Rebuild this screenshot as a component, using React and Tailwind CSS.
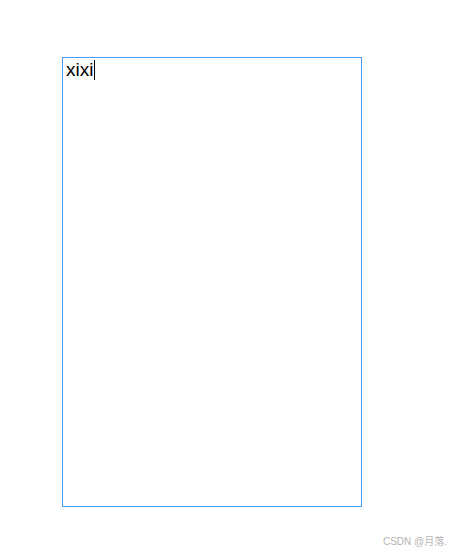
import React from 'react';

export default function App() {
    return (
        <div className="w-[450px] h-[553px] bg-white flex flex-col" style={{ fontFamily: '"Liberation Sans", "Noto Sans CJK SC", sans-serif' }}>
            {/* editable box */}
            <div className="pt-[57px] pl-[62px]">
                <div className="w-[300px] h-[450px] border border-[#4a9df7] px-[3px] pt-[1px]">
                    <div className="flex items-center h-[22px] text-[19px] leading-[22px] text-black">
                        <span>xixi</span>
                        <span className="w-px h-[20px] bg-black ml-[1px]"></span>
                    </div>
                </div>
            </div>

            {/* watermark */}
            <div className="flex justify-end pr-[3px] mt-[29px]">
                <span className="text-[10px] leading-[12px] text-[#b4b4b4]">CSDN @月落.</span>
            </div>
        </div>
    );
}
